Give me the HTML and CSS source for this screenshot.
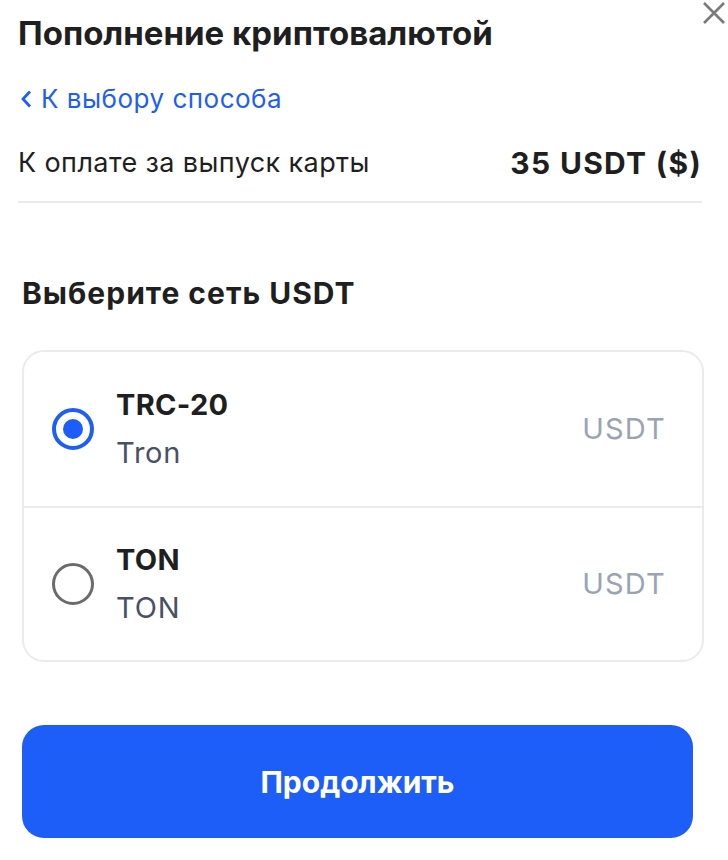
FILE: index.html
```html
<!DOCTYPE html>
<html lang="ru">
<head>
  <meta charset="UTF-8">
  <title>Пополнение криптовалютой</title>
  <link rel="stylesheet" href="styles.css">
</head>
<body>
  <div class="sheet">
    <button class="close" aria-label="Закрыть">
      <svg width="24" height="24" viewBox="0 0 24 24"><path d="M2 2 L22 22 M22 2 L2 22" stroke="#7a7a7a" stroke-width="2.6" fill="none"/></svg>
    </button>
    <h1 class="title">Пополнение криптовалютой</h1>
    <a class="back" href="#">
      <svg width="15" height="20" viewBox="0 0 15 20"><path d="M12 2.5 L5 10 L12 17.5" stroke="#1e5ef8" stroke-width="2.8" fill="none"/></svg>
      К выбору способа
    </a>
    <div class="pay-row">
      <span class="pay-label">К оплате за выпуск карты</span>
      <span class="pay-sum">35 USDT ($)</span>
    </div>

    <h2 class="section">Выберите сеть USDT</h2>
    <div class="nets">
      <label class="net">
        <span class="radio checked"></span>
        <span class="net-text">
          <span class="net-code">TRC-20</span>
          <span class="net-name">Tron</span>
        </span>
        <span class="net-cur">USDT</span>
      </label>
      <label class="net">
        <span class="radio"></span>
        <span class="net-text">
          <span class="net-code">TON</span>
          <span class="net-name">TON</span>
        </span>
        <span class="net-cur">USDT</span>
      </label>
    </div>

    <button class="go">Продолжить</button>
  </div>
</body>
</html>
```

FILE: styles.css
```css
* { box-sizing: border-box; }
html, body { margin: 0; background: #fff; }
body { font-family: Inter, Roboto, "Liberation Sans", sans-serif; color: #1f1f1f; }
.sheet { position: relative; padding: 12px 26px 0 18px; display: flex; flex-direction: column; }
.close { position: absolute; top: 1px; right: 2px; background: none; border: none; padding: 0; cursor: pointer; }
.title { margin: 0; font-size: 33px; font-weight: 700; line-height: 42px; }
.back { margin-top: 29px; display: flex; align-items: center; gap: 8px; color: #1e5ef8; text-decoration: none; font-size: 26px; letter-spacing: 0.5px; line-height: 32px; }
.pay-row { margin-top: 30px; display: flex; justify-content: space-between; align-items: center; padding-bottom: 20px; border-bottom: 2px solid #ebebeb; }
.pay-label { font-size: 27px; letter-spacing: 0.4px; line-height: 36px; }
.pay-sum { font-size: 30px; font-weight: 700; letter-spacing: 1.3px; line-height: 36px; }
.section { margin: 72px 0 0 4px; font-size: 30px; font-weight: 700; letter-spacing: 1px; line-height: 36px; }
.nets { margin: 39px -2px 0 4px; border: 2px solid #ebebeb; border-radius: 22px; }
.net { display: flex; align-items: center; height: 154px; padding: 0 36px 0 28px; cursor: pointer; }
.net + .net { border-top: 2px solid #ebebeb; }
.radio { width: 42px; height: 42px; border-radius: 50%; border: 3.5px solid #6b6b6b; flex: none; display: flex; align-items: center; justify-content: center; }
.radio.checked { border: 4px solid #1e5ef8; }
.radio.checked::after { content: ""; width: 20px; height: 20px; border-radius: 50%; background: #1e5ef8; }
.net-text { margin-left: 22px; display: flex; flex-direction: column; gap: 16px; flex: 1; }
.net-code { font-size: 29px; font-weight: 700; letter-spacing: 0.3px; line-height: 32px; color: #1f1f1f; }
.net-name { font-size: 29px; letter-spacing: 0.8px; line-height: 32px; color: #4a5163; }
.net-cur { font-size: 29px; letter-spacing: 1.2px; line-height: 32px; color: #9aa3b3; }
.go { margin: 63px 9px 0 4px; height: 113px; border: none; border-radius: 22px; background: #1e5ef8; color: #fff; font-family: Inter, sans-serif; font-size: 30px; font-weight: 700; cursor: pointer; }
```
